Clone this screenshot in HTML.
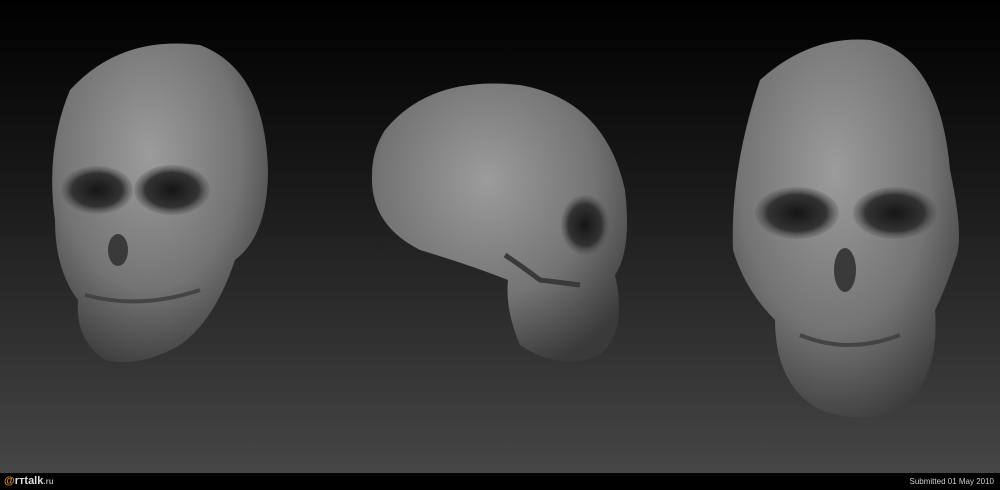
<!DOCTYPE html>
<html><head><style>
html,body{margin:0;padding:0;width:1000px;height:490px;overflow:hidden;background:#000}
.bg{position:absolute;left:0;top:0;width:1000px;height:473px;background:linear-gradient(#000 0%,#161616 35%,#333 75%,#464646 100%)}
.bar{position:absolute;left:0;top:473px;width:1000px;height:17px;background:#000;font-family:"Liberation Sans",sans-serif;color:#ccc;font-size:8px}
</style></head><body>
<div class="bg"></div>
<svg width="1000" height="473" style="position:absolute;left:0;top:0">
<defs>
<radialGradient id="g" cx="45%" cy="35%" r="70%"><stop offset="0" stop-color="#9c9c9c"/><stop offset="0.6" stop-color="#747474"/><stop offset="1" stop-color="#3a3a3a"/></radialGradient>
<radialGradient id="e" cx="50%" cy="50%" r="50%"><stop offset="0" stop-color="#151515"/><stop offset="0.7" stop-color="#333"/><stop offset="1" stop-color="#555" stop-opacity="0.2"/></radialGradient>
</defs>
<path d="M70,90 Q120,35 200,45 Q265,70 268,170 Q268,235 235,260 Q215,320 180,345 Q140,368 105,360 Q75,340 78,300 Q55,270 55,220 Q45,150 70,90Z" fill="url(#g)"/>
<ellipse cx="97" cy="190" rx="36" ry="24" fill="url(#e)"/>
<ellipse cx="172" cy="190" rx="38" ry="25" fill="url(#e)"/>
<ellipse cx="118" cy="250" rx="10" ry="16" fill="#3a3a3a"/>
<path d="M85,295 Q140,310 200,290" stroke="#444" stroke-width="4" fill="none"/>
<path d="M385,130 Q430,75 520,85 Q605,100 625,190 Q632,250 615,275 Q628,330 600,355 Q560,372 520,345 Q505,310 508,280 Q470,265 420,250 Q370,225 372,175 Q372,150 385,130Z" fill="url(#g)"/>
<path d="M505,255 Q520,265 540,280 L580,285" stroke="#3a3a3a" stroke-width="5" fill="none"/>
<ellipse cx="585" cy="225" rx="24" ry="30" fill="url(#e)"/>
<path d="M760,80 Q810,35 870,40 Q940,55 950,170 Q965,240 955,260 Q945,290 935,310 Q940,380 900,410 Q860,425 820,410 Q775,385 775,320 Q745,290 733,250 Q730,170 760,80Z" fill="url(#g)"/>
<ellipse cx="797" cy="213" rx="42" ry="26" fill="url(#e)"/>
<ellipse cx="895" cy="213" rx="42" ry="26" fill="url(#e)"/>
<ellipse cx="845" cy="270" rx="11" ry="22" fill="#3a3a3a"/>
<path d="M800,335 Q848,355 900,335" stroke="#444" stroke-width="4" fill="none"/>
</svg>
<div class="bar"><span style="position:absolute;left:4px;top:2px;color:#d88a2a;font-size:11px;font-weight:bold">@<span style="color:#ddd">rтtalk</span><span style="font-size:8px;color:#aaa">.ru</span></span><span style="position:absolute;right:6px;top:4px">Submitted 01 May 2010</span></div>
</body></html>
